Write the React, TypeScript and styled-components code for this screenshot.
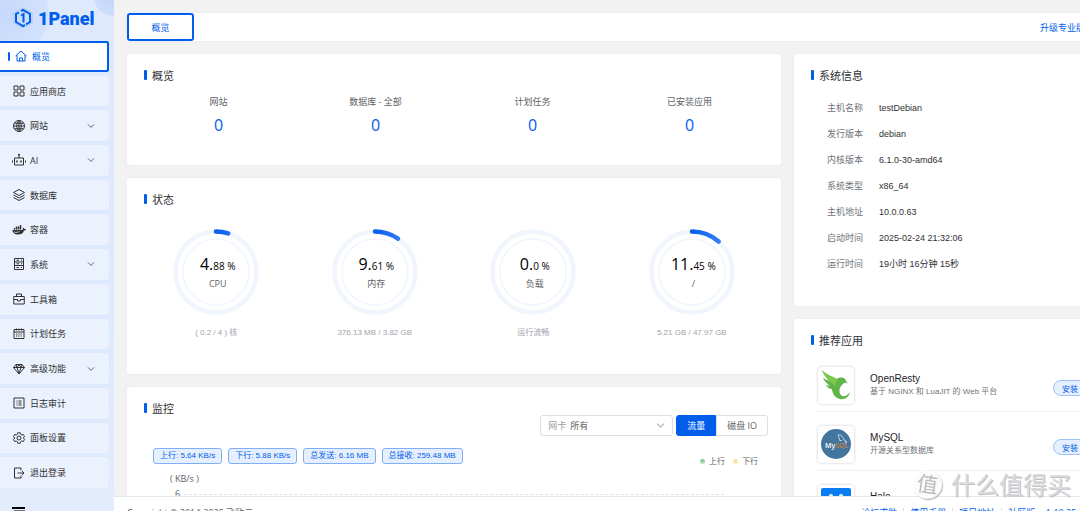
import React from "react";
import styled, { createGlobalStyle, css } from "styled-components";

const ui = `"Open Sans", "Noto Sans CJK SC", sans-serif`;
const arial = `"Liberation Sans", "Noto Sans CJK SC", sans-serif`;
const blue = "#005eeb";

const GlobalStyle = createGlobalStyle`
  * { box-sizing: border-box; }
  body { margin: 0; overflow: hidden; background: #f2f2f2; font-family: ${ui}; font-size: 9px; color: #303133; }
  button, select { font-family: inherit; margin: 0; }
  a { text-decoration: none; color: inherit; }
  h2, h3, p, ul, dl, dd { margin: 0; padding: 0; font-weight: 400; }
`;

const Shell = styled.div`
  position: relative;
  display: flex;
  height: calc(100vh + 16px);
  overflow: hidden;
`;

/* Sidebar */
const Sidebar = styled.aside`
  flex: none;
  width: 114px;
  display: flex;
  flex-direction: column;
  background:
    radial-gradient(circle at 112px -2px, #c3d6fa 0, #cddefc 17px, transparent 18px),
    radial-gradient(circle at 4px 14px, #c6d9fb 0, #d3e2fc 44px, transparent 45px),
    linear-gradient(#dfe9fd, #dde9fe 60%, #e2ecfd);
`;
const Brand = styled.a`
  display: flex;
  align-items: center;
  gap: 5px;
  height: 41px;
  padding: 0 0 5px 13px;
  && { color: ${blue}; }
  font-family: Roboto, sans-serif;
  font-size: 18px;
  font-weight: 900;
`;
const Menu = styled.nav`
  flex: 1;
  display: flex;
  flex-direction: column;
  gap: 4px;
  padding-right: 5px;
`;
const MenuItem = styled.a<{ $active?: boolean }>`
  flex: 1;
  max-height: 36px;
  display: flex;
  align-items: center;
  gap: 5px;
  padding: 0 14px 0 13px;
  font-size: 9px;
  border-radius: 0 3px 3px 0;
  background: #ebf2fe;
  box-shadow: 0 0 2px #d4e2fb;
  ${(p) => p.$active && css`
    && { color: ${blue}; }
    background: #fff;
    box-shadow: inset 0 2px ${blue}, inset 0 -2px ${blue}, inset -2px 0 ${blue};
    padding-left: 8px;
    &::before { content: ""; width: 2px; height: 9px; background: ${blue}; border-radius: 1px; }
  `}
`;
const MenuLabel = styled.span`flex: 1;`;
const SideFoot = styled.div`
  height: 39px;
  padding: 19px 12px 0;
  color: #000;
  background: #e3ecfc;
`;

/* Main area */
const Main = styled.main`
  flex: 1;
  min-width: 0;
  display: flex;
  flex-direction: column;
  overflow: hidden;
`;
const Wide = styled.div`
  flex: 1;
  min-height: 0;
  overflow: hidden;
  margin-right: -28px;
  padding: 13px 0 0 13px;
`;
const TabBar = styled.header`
  display: flex;
  align-items: center;
  justify-content: space-between;
  height: 28px;
  margin-bottom: 13px;
  padding-right: 23px;
  background: #fff;
  border-radius: 3px;
  box-shadow: 0 0 2px #dfe5f0;
`;
const Tab = styled.button`
  width: 67px;
  height: 28px;
  border: 2px solid ${blue};
  border-radius: 3px;
  background: #fff;
  color: ${blue};
  font-size: 9px;
  padding: 0;
`;
const Upgrade = styled.a`
  && { color: ${blue}; }
  font-size: 9px;
`;
const Columns = styled.div`
  display: grid;
  grid-template-columns: 25fr 12fr;
  gap: 13px;
  align-items: start;
`;
const Stack = styled.div`
  display: grid;
  gap: 13px;
  min-width: 0;
`;
const Card = styled.section<{ $h: number }>`
  min-height: ${(p) => p.$h}px;
  background: #fff;
  border-radius: 3px;
  box-shadow: 0 0 2px #dfe5f0;
`;
const Title = styled.h2`
  display: flex;
  align-items: center;
  gap: 5px;
  height: 42px;
  padding-left: 17px;
  font-size: 11px;
  &::before { content: ""; width: 3px; height: 10px; border-radius: 1px; background: ${blue}; }
`;
const Counts = styled.div`
  display: grid;
  grid-template-columns: repeat(4, 1fr);
  padding: 0 13px;
  text-align: center;
`;
const CountLabel = styled.p`
  color: #606266;
  font-size: 9px;
  line-height: 12px;
`;
const CountLink = styled.a`
  && { color: ${blue}; }
  font-size: 16px;
  line-height: 34px;
`;
const Gauges = styled.div`
  display: grid;
  grid-template-columns: repeat(4, 1fr);
  padding: 9px 10px 0;
`;
const Gauge = styled.div`
  display: flex;
  flex-direction: column;
  align-items: center;
  gap: 12px;
`;
const Dial = styled.div`
  display: grid;
  place-items: center;
  > * { grid-area: 1 / 1; }
`;
const Reading = styled.div`
  padding: 1px 0 0 3px;
  text-align: center;
  color: #000;
  font-size: 10px;
  line-height: 20px;
`;
const Big = styled.span`font-size: 16px;`;
const GaugeName = styled.p`
  color: #606266;
  font-size: 9px;
  line-height: 16px;
`;
const Detail = styled.p`
  color: #a0a3ab;
  font-family: ${arial};
  font-size: 8px;
  line-height: 12px;
`;

/* Monitor */
const Controls = styled.div`
  display: flex;
  justify-content: flex-end;
  gap: 3px;
  margin-top: -14px;
  padding-right: 13px;
`;
const Picker = styled.label`
  display: flex;
  align-items: center;
  gap: 4px;
  width: 133px;
  height: 21px;
  padding: 0 7px;
  border: 1px solid #dcdfe6;
  border-radius: 3px;
  color: #9a9da4;
  font-size: 9px;
`;
const Select = styled.select`
  flex: 1;
  appearance: none;
  border: 0;
  padding: 0;
  background: none;
  color: #606266;
  font-size: 9px;
`;
const Segments = styled.div`display: flex;`;
const Segment = styled.button<{ $on?: boolean }>`
  height: 21px;
  padding: 0 10px;
  font-size: 9px;
  border: 1px solid ${(p) => (p.$on ? blue : "#dcdfe6")};
  border-radius: ${(p) => (p.$on ? "3px 0 0 3px" : "0 3px 3px 0")};
  background: ${(p) => (p.$on ? blue : "#fff")};
  color: ${(p) => (p.$on ? "#fff" : "#606266")};
`;
const Tags = styled.div`
  display: flex;
  gap: 6px;
  padding: 12px 26px 0;
`;
const Tag = styled.span`
  height: 16px;
  padding: 0 6px;
  border: 1px solid #80aff6;
  border-radius: 3px;
  background: #e6effd;
  color: ${blue};
  font-family: ${arial};
  font-size: 8px;
  line-height: 14px;
  white-space: nowrap;
`;
const Legend = styled.div`
  display: flex;
  justify-content: flex-end;
  gap: 8px;
  margin-top: -10px;
  padding-right: 23px;
  font-size: 8px;
  line-height: 14px;
  color: #606266;
`;
const Key = styled.span<{ $c: string }>`
  display: flex;
  align-items: center;
  gap: 4px;
  &::before { content: ""; width: 5px; height: 5px; border-radius: 50%; background: ${(p) => p.$c}; }
`;
const AxisName = styled.p`
  padding: 4px 0 0 43px;
  color: #606266;
  font-size: 9px;
  line-height: 14px;
`;
const Tick = styled.div`
  display: flex;
  align-items: center;
  gap: 4px;
  padding: 1px 57px 0 48px;
  color: #606266;
  font-size: 9px;
  line-height: 14px;
  &::after { content: ""; flex: 1; border-top: 1px dashed #dde3ee; }
`;

/* Right column */
const Facts = styled.dl`
  display: grid;
  grid-template-columns: 52px 1fr;
  margin-top: -1px;
  padding: 0 0 29px 33px;
  line-height: 26px;
`;
const Term = styled.dt`color: #707379; font-size: 9px;`;
const Fact = styled.dd`font-family: ${arial}; font-size: 9px;`;
const AppList = styled.div`
  margin-top: -8px;
  padding: 0 21px 0 23px;
`;
const AppRow = styled.article`
  display: flex;
  align-items: center;
  height: 59px;
  padding-top: 6px;
  border-bottom: 1px solid #f0f1f4;
`;
const AppIcon = styled.div`
  display: grid;
  place-items: center;
  width: 38px;
  height: 39px;
  margin-right: 15px;
  border: 1px solid #ebebed;
  border-radius: 5px;
  box-shadow: 0 0 2px #e5e5e8;
`;
const AppText = styled.div`flex: 1; min-width: 0; font-family: ${arial}; white-space: nowrap;`;
const AppName = styled.h3`font-size: 10px; line-height: 14px; color: #1f2329;`;
const AppDesc = styled.p`font-size: 8px; line-height: 12px; color: #707379;`;
const Install = styled.button`
  flex: none;
  width: 34px;
  height: 16px;
  margin-top: 6px;
  padding: 0;
  border: 1px solid #9dc0f8;
  border-radius: 8px;
  background: #e6effd;
  color: ${blue};
  font-size: 8px;
`;
const Footer = styled.footer`
  flex: none;
  display: flex;
  align-items: center;
  justify-content: space-between;
  height: 31px;
  margin-right: -28px;
  padding: 0 13px;
  border-top: 1px solid #e4e7ed;
  background: #fff;
  color: #606266;
  font-size: 9px;
`;
const Links = styled.div`
  display: flex;
  align-items: center;
  gap: 6px;
  padding-right: 6px;
  color: ${blue};
`;
const Bar = styled.span`width: 1px; height: 9px; background: #dcdfe6;`;
const Watermark = styled.div`
  position: absolute;
  right: 9px;
  bottom: 25px;
  display: flex;
  align-items: center;
  gap: 9px;
  font-family: "Noto Sans CJK SC", sans-serif;
  font-size: 24px;
  line-height: 36px;
  color: #dcdcde;
  text-shadow: 1px 1px 0 #c0c0c3;
  pointer-events: none;
`;
const Seal = styled.span`
  width: 29px;
  height: 29px;
  border-radius: 50%;
  background: #fcfcfc;
  box-shadow: 1px 1px 1px #b9b9bc;
  color: #bcbcbf;
  font-size: 21px;
  line-height: 27px;
  text-align: center;
  text-shadow: none;
  transform: rotate(8deg);
`;

const Icon = ({ children, size = 12 }: { children: React.ReactNode; size?: number }) => (
  <svg width={size} height={size} viewBox="0 0 24 24" fill="none" stroke="currentColor" strokeWidth="2" strokeLinejoin="round" overflow="visible" aria-hidden>
    {children}
  </svg>
);
const Chevron = ({ size = 8, color = "#606266" }) => (
  <svg width={size} height={size} viewBox="0 0 8 8" fill="none" stroke={color} aria-hidden><path d="M1 2.400 4 5.400 7 2.400" /></svg>
);

const icons: Record<string, React.ReactNode> = {
  home: <path d="M1 12 12 2l11 10M4 10v12h16V10M9 22v-6h6v6" />,
  grid: <path d="M2 2h8v8H2zM14 2h8v8h-8zM2 14h8v8H2zM14 14h8v8h-8z" />,
  globe: <path d="M12 1a11 11 0 1 0 0 22a11 11 0 1 0 0-22zM12 1c-6 5-6 17 0 22c6-5 6-17 0-22zM12 1v22M1 12h22M3 6.500h18M3 17.500h18" />,
  robot: <><path d="M3 8h18v14H3zM12 8V2M-1 13v4M25 13v4" /><path d="M8 13v4M16 13v4" strokeWidth="3" /><circle cx="12" cy="1.500" r="2" fill="currentColor" stroke="none" /></>,
  layers: <path d="m12 1 11 6-11 6L1 7zM1 12l11 6 11-6M1 17l11 6 11-6" />,
  docker: <><path d="M-1 12h20c1-2 1-3 0-5 2 0 3 2 4 3h3c0 2-2 3-4 3-2 6-6 8-12 8-7 0-11-4-11-9z" fill="currentColor" stroke="none" /><path d="M3 8v3M7 5v6M11 5v6M15 2v9" strokeWidth="3" /><path d="M2 16c5 2 8 0 11-1" stroke="#ebf2fe" strokeWidth="1.500" /></>,
  server: <path d="M3 1h18v22H3zM3 8h18M3 15h18M7 4.500h5M7 11.500h5M7 19h5M16 4.500h2M16 11.500h2M16 19h2" />,
  toolbox: <path d="M1.500 7h21v15h-21zM7 7V2h10v5M1.500 13H9v3h6v-3h7.500" />,
  calendar: <><path d="M2 3h20v18H2zM2 8h20M7 1v4M12 1v4M17 1v4" /><path d="M6 12h12M6 16h12" strokeDasharray="2.500 2" /></>,
  gem: <path d="M6 3h12l5 6-11 13L1 9zM1 9h22M6 3l2 6 4 12 4-12 2-6M8 9l4-6 4 6" />,
  list: <><path d="M2 2h20v20H2z" /><path d="M7 8h2M11 8h6M7 12h2M11 12h6M7 16h2M11 16h6" /></>,
  gear: <><path d="M9.500 1.500h5l.8 3.200 2.200 1.300 3.200-1 2.300 4.200L20.700 12l2.300 2.800-2.300 4.200-3.200-1-2.200 1.300-.8 3.200h-5l-.8-3.200L6.500 18l-3.200 1L1 14.800 3.300 12 1 9.200 3.300 5l3.200 1 2.200-1.300z" /><circle cx="12" cy="12" r="4" /></>,
  exit: <path d="M16 7V2H3v20h13v-5M9 12h13M18 8l4 4-4 4" />,
};

const menu: [string, string, boolean?][] = [
  ["home", "概览"], ["grid", "应用商店"], ["globe", "网站", true], ["robot", "AI", true],
  ["layers", "数据库"], ["docker", "容器"], ["server", "系统", true], ["toolbox", "工具箱"],
  ["calendar", "计划任务"], ["gem", "高级功能", true], ["list", "日志审计"], ["gear", "面板设置"], ["exit", "退出登录"],
];
const counts = ["网站", "数据库 - 全部", "计划任务", "已安装应用"];
const gauges = [
  { int: "4", dec: "88", name: "CPU", detail: "( 0.2 / 4 ) 核" },
  { int: "9", dec: "61", name: "内存", detail: "376.13 MB / 3.82 GB" },
  { int: "0", dec: "0", name: "负载", detail: "运行流畅" },
  { int: "11", dec: "45", name: "/", detail: "5.21 GB / 47.97 GB" },
];
const tags = ["上行: 5.64 KB/s", "下行: 5.88 KB/s", "总发送: 6.16 MB", "总接收: 259.48 MB"];
const facts = [
  ["主机名称", "testDebian"], ["发行版本", "debian"], ["内核版本", "6.1.0-30-amd64"], ["系统类型", "x86_64"],
  ["主机地址", "10.0.0.63"], ["启动时间", "2025-02-24 21:32:06"], ["运行时间", "19小时 16分钟 15秒"],
];

const Ring = ({ value }: { value: number }) => (
  <svg width="86" height="86" viewBox="0 0 86 86" fill="none" aria-hidden>
    <defs>
      <linearGradient id="arc" x1="83" x2="70" y1="43" y2="75" gradientUnits="userSpaceOnUse">
        <stop stopColor="#0a5fee" /><stop offset="1" stopColor="#3c86f5" />
      </linearGradient>
    </defs>
    <circle cx="43" cy="43" r="40.500" stroke="#f0f5fe" strokeWidth="4.500" />
    <circle cx="43" cy="43" r="33" stroke="#f0f5fe" strokeWidth="1.500" />
    {value > 0 && (
      <circle cx="43" cy="43" r="40.500" stroke="url(#arc)" strokeWidth="4.500" strokeLinecap="round"
        pathLength="100" strokeDasharray={`${value} 100`} transform="rotate(-90 43 43)" />
    )}
  </svg>
);

const OpenRestyLogo = () => (
  <svg width="30" height="30" viewBox="0 0 30 30" aria-hidden>
    <path d="M1 0C5 5 11 6 16 9c2-2 6-2 8 0l3 5c-2-2-4-1-5 0-4 3-5 9-1 12 3 1 6-1 8-4-1 5-5 8-10 7-5-1-8-6-8-10-3 0-5-2-6-4l4 1C5 13 3 10 2 8l6 3C5 7 2 4 1 0z" fill="#5fb548" />
    <path d="M1 0C5 5 11 6 16 9l-2 7C8 11 3 6 1 0z" fill="#7cc84f" />
  </svg>
);
const MySqlLogo = () => (
  <svg width="30" height="30" viewBox="0 0 30 30" aria-hidden>
    <circle cx="15" cy="15" r="15" fill="#43759d" />
    <path d="M17 6c3-1 5 2 6 5l3 2-2 0 1 2M17 6l2 6 1-1 1 1" fill="none" stroke="#dbe6ef" strokeWidth=".8" />
    <text x="4" y="19" fontFamily="Open Sans, sans-serif" fontSize="7" fontWeight="600" fill="#fff">My<tspan fill="#c9823f">SQL</tspan></text>
  </svg>
);
const HaloLogo = () => (
  <svg width="30" height="30" viewBox="0 0 30 30" aria-hidden>
    <rect width="30" height="30" rx="2" fill="#0a7df2" />
    <path d="M10 8v14M20 8v14M10 15h10" stroke="#fff" strokeWidth="4" strokeLinecap="round" />
  </svg>
);
const apps = [
  { name: "OpenResty", desc: "基于 NGINX 和 LuaJIT 的 Web 平台", logo: <OpenRestyLogo /> },
  { name: "MySQL", desc: "开源关系型数据库", logo: <MySqlLogo /> },
  { name: "Halo", desc: "强大易用的开源建站工具", logo: <HaloLogo /> },
];

export default function App() {
  return (
    <Shell>
      <GlobalStyle />
      <Sidebar>
        <Brand href="#">
          <svg width="20" height="22" viewBox="0 0 20 22" fill="none" aria-hidden>
            <path d="M10 1 19 6v10l-9 5-9-5V6z" stroke="#a9c6f8" />
            <path d="m8 4.200 2-1.200 7 4v8l-4 2.300M12 17.800 10 19l-7-4V7l3-1.700" stroke={blue} strokeWidth="2" />
            <path d="M8 8.500 10.500 7v8.500" stroke={blue} strokeWidth="2" />
          </svg>
          1Panel
        </Brand>
        <Menu>
          {menu.map(([icon, label, sub], i) => (
            <MenuItem href="#" key={label} $active={i === 0}>
              <Icon>{icons[icon]}</Icon>
              <MenuLabel>{label}</MenuLabel>
              {sub && <Chevron />}
            </MenuItem>
          ))}
        </Menu>
        <SideFoot>
          <svg width="14" height="12" viewBox="0 0 14 12" aria-hidden><path d="M0 1h13M2 4.500h11M0 8h13" stroke="currentColor" strokeWidth="2" /></svg>
        </SideFoot>
      </Sidebar>
      <Main>
        <Wide>
          <TabBar>
            <Tab>概览</Tab>
            <Upgrade href="#">升级专业版</Upgrade>
          </TabBar>
          <Columns>
            <Stack>
              <Card $h={111}>
                <Title>概览</Title>
                <Counts>
                  {counts.map((c) => (
                    <div key={c}><CountLabel>{c}</CountLabel><CountLink href="#">0</CountLink></div>
                  ))}
                </Counts>
              </Card>
              <Card $h={196}>
                <Title>状态</Title>
                <Gauges>
                  {gauges.map((g) => (
                    <Gauge key={g.name}>
                      <Dial>
                        <Ring value={Number(`${g.int}.${g.dec}`)} />
                        <Reading>
                          <Big>{g.int}.</Big>{g.dec} %
                          <GaugeName>{g.name}</GaugeName>
                        </Reading>
                      </Dial>
                      <Detail>{g.detail}</Detail>
                    </Gauge>
                  ))}
                </Gauges>
              </Card>
              <Card $h={240}>
                <Title>监控</Title>
                <Controls>
                  <Picker>
                    网卡
                    <Select defaultValue="all"><option value="all">所有</option></Select>
                    <Chevron size={9} color="#a8abb2" />
                  </Picker>
                  <Segments>
                    <Segment $on>流量</Segment>
                    <Segment>磁盘 IO</Segment>
                  </Segments>
                </Controls>
                <Tags>{tags.map((t) => <Tag key={t}>{t}</Tag>)}</Tags>
                <Legend>
                  <Key $c="linear-gradient(#6fbf7f, #c3e6cb)">上行</Key>
                  <Key $c="linear-gradient(#fbd98a, #fdeecb)">下行</Key>
                </Legend>
                <AxisName>( KB/s )</AxisName>
                <Tick>6</Tick>
              </Card>
            </Stack>
            <Stack>
              <Card $h={252}>
                <Title>系统信息</Title>
                <Facts>
                  {facts.map(([k, v]) => (
                    <React.Fragment key={k}><Term>{k}</Term><Fact>{v}</Fact></React.Fragment>
                  ))}
                </Facts>
              </Card>
              <Card $h={300}>
                <Title>推荐应用</Title>
                <AppList>
                  {apps.map((a) => (
                    <AppRow key={a.name}>
                      <AppIcon>{a.logo}</AppIcon>
                      <AppText><AppName>{a.name}</AppName><AppDesc>{a.desc}</AppDesc></AppText>
                      <Install>安装</Install>
                    </AppRow>
                  ))}
                </AppList>
              </Card>
            </Stack>
          </Columns>
        </Wide>
        <Footer>
          <span>Copyright © 2014-2025 飞致云</span>
          <Links>
            <a href="#">论坛求助</a><Bar />
            <a href="#">使用手册</a><Bar />
            <a href="#">项目地址</a><Bar />
            <a href="#">社区版</a>
            <a href="#">v1.10.25-lts</a>
          </Links>
        </Footer>
      </Main>
      <Watermark><Seal>值</Seal>什么值得买</Watermark>
    </Shell>
  );
}
